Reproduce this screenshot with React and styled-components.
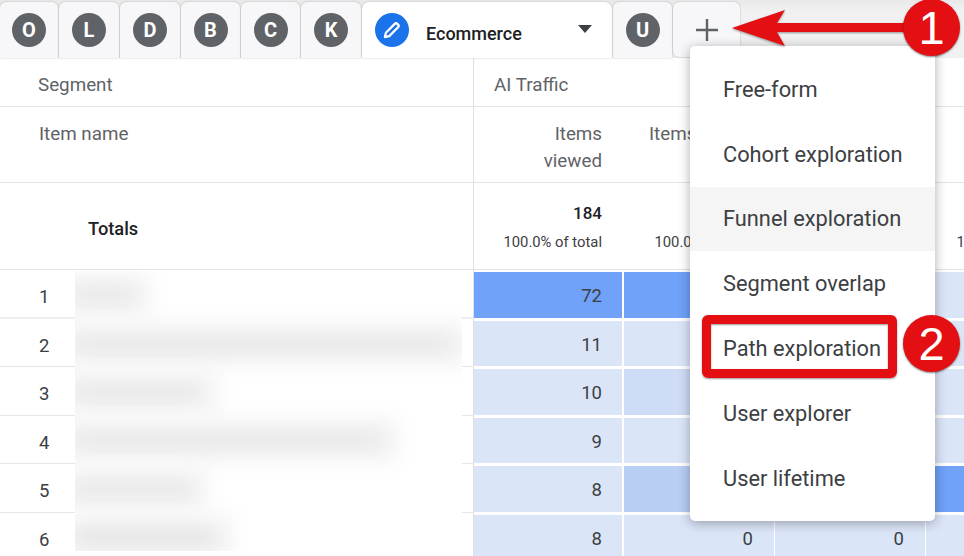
import React from "react";
import styled, { createGlobalStyle } from "styled-components";

const GlobalStyle = createGlobalStyle`
  * { box-sizing: border-box; }
  html, body { margin: 0; background: #fff; overflow: hidden; }
  body { font-family: Roboto, "Liberation Sans", sans-serif; color: #3c4043; }
`;

const COLUMNS = "474px 150px 151px 151px 151px";

const Page = styled.div`
  position: relative;
  width: 964px;
  height: 556px;
  overflow: hidden;
  background: #fff;
`;

const TabBar = styled.div`
  display: flex;
  align-items: flex-start;
  gap: 1px;
  height: 58px;
  padding-top: 2px;
  background: linear-gradient(#e9e9e9, #f1f1f2 12px);
  box-shadow: inset 0 -1px 0 #eee;
`;

const Tab = styled.div`
  display: flex;
  align-items: center;
  justify-content: center;
  flex: none;
  width: ${p => p.$width}px;
  height: ${p => p.$height || 56}px;
  background: #f7f7f9;
  border-radius: ${p => p.$radius || "6px 6px 0 0"};
  box-shadow: 0 0 2px rgba(0, 0, 0, 0.28);
`;

const ActiveTab = styled.div`
  display: flex;
  align-items: center;
  flex: none;
  width: 250px;
  height: 56px;
  padding: 0 20px 0 13px;
  background: #fff;
  border-radius: 7px 7px 0 0;
  box-shadow: 0 0 2px rgba(0, 0, 0, 0.25);
  position: relative;
  z-index: 1;
`;

const Avatar = styled.span`
  display: flex;
  align-items: center;
  justify-content: center;
  width: 34px;
  height: 34px;
  border-radius: 50%;
  background: ${p => (p.$active ? "#1a73e8" : "#5f6368")};
  color: #fff;
  font-size: 20px;
  font-weight: 700;
  flex: none;
`;

const TabTitle = styled.span`
  margin: 6px 0 0 17px;
  font-size: 18px;
  font-weight: 500;
  color: #202124;
  flex: 1;
`;

const Caret = styled.span`
  width: 0;
  height: 0;
  margin-top: -2px;
  border-left: 7.5px solid transparent;
  border-right: 7.5px solid transparent;
  border-top: 8px solid #3c4043;
`;

const Row = styled.div`
  display: grid;
  grid-template-columns: ${COLUMNS};
  height: ${p => p.$height}px;
  border-bottom: 1px solid #e3e3e3;
`;

const LabelCell = styled.div`
  display: flex;
  align-items: ${p => p.$align || "flex-start"};
  height: 100%;
  padding: ${p => p.$padding};
  border-right: 1px solid #e0e0e0;
  font-size: ${p => (p.$strong ? 18.3 : 18.8)}px;
  line-height: 27px;
  font-weight: ${p => (p.$strong ? 500 : 400)};
  color: ${p => (p.$strong ? "#202124" : "#5f6368")};
`;

const SpanCell = styled.div`
  grid-column: 2 / -1;
  padding: 14px 0 0 20px;
  font-size: 18.8px;
  line-height: 27px;
  color: #5f6368;
`;

const HeadCell = styled.div`
  padding: 14px 22px 0 0;
  text-align: right;
  font-size: 18.8px;
  line-height: 27px;
  color: #5f6368;
  white-space: pre-line;
`;

const TotalCell = styled.div`
  display: flex;
  flex-direction: column;
  align-items: flex-end;
  padding: 19px 22px 0 0;
  white-space: nowrap;
`;

const TotalValue = styled.strong`
  font-size: 17px;
  font-weight: 500;
  line-height: 22px;
  color: #202124;
`;

const TotalShare = styled.span`
  margin-top: 8px;
  font-size: 14.8px;
  line-height: 20px;
  color: #3c4043;
`;

const DataRow = styled.div`
  display: grid;
  grid-template-columns: ${COLUMNS};
  height: 48.5px;
`;

const RankCell = styled.div`
  display: flex;
  align-items: center;
  padding: 7px 0 0 39px;
  border-right: 1px solid #e0e0e0;
  border-bottom: ${p => (p.$thick ? "2px solid #eee" : "1px solid #e6e6e6")};
  font-size: 18.5px;
  color: #3c4043;
`;

const HeatCell = styled.div`
  display: flex;
  align-items: center;
  justify-content: flex-end;
  margin: 2px ${p => (p.$first ? 2 : 1)}px 1px 0;
  padding: 3px ${p => (p.$first ? 20 : 21)}px 0 0;
  background: ${p => p.$fill};
  font-size: 18.5px;
  color: #3c4043;
`;

const Redaction = styled.div`
  position: absolute;
  left: 75px;
  top: 271px;
  width: 387px;
  height: 280px;
  display: flex;
  flex-direction: column;
  overflow: hidden;
  background: #fff;
`;

const SmearRow = styled.div`
  display: flex;
  align-items: center;
  flex: none;
  height: 48.4px;
`;

const Smear = styled.div`
  width: ${p => p.$width}px;
  height: 8px;
  background: ${p => p.$tone || "#dcdcdc"};
  box-shadow: 0 0 0 17px #f3f3f3;
  filter: blur(10px);
`;

const Menu = styled.div`
  position: absolute;
  left: 690px;
  top: 46px;
  width: 245px;
  height: 475px;
  padding-top: 11px;
  background: #fff;
  border-radius: 5px;
  box-shadow: 0 2px 12px rgba(0, 0, 0, 0.32);
`;

const MenuItem = styled.div`
  display: flex;
  align-items: center;
  height: 64.8px;
  padding-left: 33px;
  background: ${p => (p.$hover ? "#f5f5f5" : "transparent")};
  font-size: 21.8px;
  color: #3c4043;
  white-space: nowrap;
`;

const Callout = styled.div`
  position: absolute;
  left: 702px;
  top: 315px;
  width: 195px;
  height: 63px;
  border: 9px solid #e30f13;
  border-radius: 6px;
  box-shadow: 0 1px 2px rgba(0, 0, 0, 0.4), inset 0 1px 2px rgba(0, 0, 0, 0.4);
`;

const Badge = styled.div`
  position: absolute;
  left: 903px;
  top: ${p => p.$top}px;
  display: flex;
  align-items: center;
  justify-content: center;
  width: 57px;
  height: 57px;
  border-radius: 50%;
  background: #e30f13;
  color: #fff;
  font-family: "Liberation Sans", Arial, sans-serif;
  font-size: 47px;
  box-shadow: 0 1px 2px rgba(0, 0, 0, 0.5);
`;

const Arrow = styled.svg`
  position: absolute;
  left: 725px;
  top: 0;
  filter: drop-shadow(0 1px 1px rgba(0, 0, 0, 0.4));
`;

const tabs = [
  { letter: "O", width: 58 },
  { letter: "L", width: 60 },
  { letter: "D", width: 60 },
  { letter: "B", width: 59 },
  { letter: "C", width: 59 },
  { letter: "K", width: 60 },
];

const LIGHT = "#dbe5f8";
const STRONG = "#6fa2f8";

// only the figures the open menu leaves visible
const rows = [
  { rank: 1, values: [72], fills: [STRONG, STRONG, LIGHT, LIGHT], thick: true },
  { rank: 2, values: [11], fills: [LIGHT, LIGHT, LIGHT, LIGHT] },
  { rank: 3, values: [10], fills: [LIGHT, "#cfdcf6", LIGHT, LIGHT] },
  { rank: 4, values: [9], fills: [LIGHT, LIGHT, LIGHT, LIGHT] },
  { rank: 5, values: [8], fills: [LIGHT, "#b9cef3", LIGHT, STRONG] },
  { rank: 6, values: [8, 0, 0], fills: [LIGHT, LIGHT, LIGHT, LIGHT] },
];

const smears = [
  { width: 58 },
  { width: 375 },
  { width: 125 },
  { width: 305 },
  { width: 115 },
  { width: 140, tone: "#d4d4d4" },
];

const menuItems = [
  "Free-form",
  "Cohort exploration",
  "Funnel exploration",
  "Segment overlap",
  "Path exploration",
  "User explorer",
  "User lifetime",
];

export default function App() {
  return (
    <Page>
      <GlobalStyle />
      <TabBar>
        {tabs.map(tab => (
          <Tab key={tab.letter} $width={tab.width}>
            <Avatar>{tab.letter}</Avatar>
          </Tab>
        ))}
        <ActiveTab>
          <Avatar $active>
            <svg width="20" height="20" viewBox="0 0 24 24" fill="none" stroke="#fff" strokeWidth="2.7" strokeLinejoin="round">
              <path d="M3.5 20.5l1.2-5.2L15.3 4.7a2.2 2.2 0 0 1 3.1 0l.9.9a2.2 2.2 0 0 1 0 3.1L8.7 19.3z" />
            </svg>
          </Avatar>
          <TabTitle>Ecommerce</TabTitle>
          <Caret />
        </ActiveTab>
        <Tab $width={59}>
          <Avatar>U</Avatar>
        </Tab>
        <Tab $width={67} $height={55} $radius="6px">
          <svg width="24" height="24" viewBox="0 0 24 24" stroke="#5f6368" strokeWidth="2.4">
            <path d="M1 12h22M12 1v22" />
          </svg>
        </Tab>
      </TabBar>

      <Row $height={49}>
        <LabelCell $padding="14px 0 0 38px">Segment</LabelCell>
        <SpanCell>AI Traffic</SpanCell>
      </Row>
      <Row $height={76}>
        <LabelCell $padding="14px 0 0 39px">Item name</LabelCell>
        <HeadCell>{"Items\nviewed"}</HeadCell>
        <HeadCell>Items added</HeadCell>
      </Row>
      <Row $height={87}>
        <LabelCell $padding="5px 0 0 88px" $align="center" $strong>
          Totals
        </LabelCell>
        <TotalCell>
          <TotalValue>184</TotalValue>
          <TotalShare>100.0% of total</TotalShare>
        </TotalCell>
        <TotalCell>
          <TotalValue>&nbsp;</TotalValue>
          <TotalShare>100.0% of total</TotalShare>
        </TotalCell>
        <span />
        <TotalCell>
          <TotalValue>&nbsp;</TotalValue>
          <TotalShare>100.0% of total</TotalShare>
        </TotalCell>
      </Row>

      {rows.map(row => (
        <DataRow key={row.rank}>
          <RankCell $thick={row.thick}>{row.rank}</RankCell>
          {row.fills.map((fill, i) => (
            <HeatCell key={i} $first={i === 0} $fill={fill}>
              {row.values[i]}
            </HeatCell>
          ))}
        </DataRow>
      ))}

      <Redaction>
        {smears.map((smear, i) => (
          <SmearRow key={i}>
            <Smear $width={smear.width} $tone={smear.tone} />
          </SmearRow>
        ))}
      </Redaction>

      <Menu>
        {menuItems.map(item => (
          <MenuItem key={item} $hover={item === "Funnel exploration"}>
            {item}
          </MenuItem>
        ))}
      </Menu>
      <Callout />

      <Arrow width="190" height="56" viewBox="0 0 190 56">
        <path d="M7 28L60 10l-8 13h130v9H52l8 14z" fill="#e30f13" />
      </Arrow>
      <Badge $top={-1}>1</Badge>
      <Badge $top={315}>2</Badge>
    </Page>
  );
}
